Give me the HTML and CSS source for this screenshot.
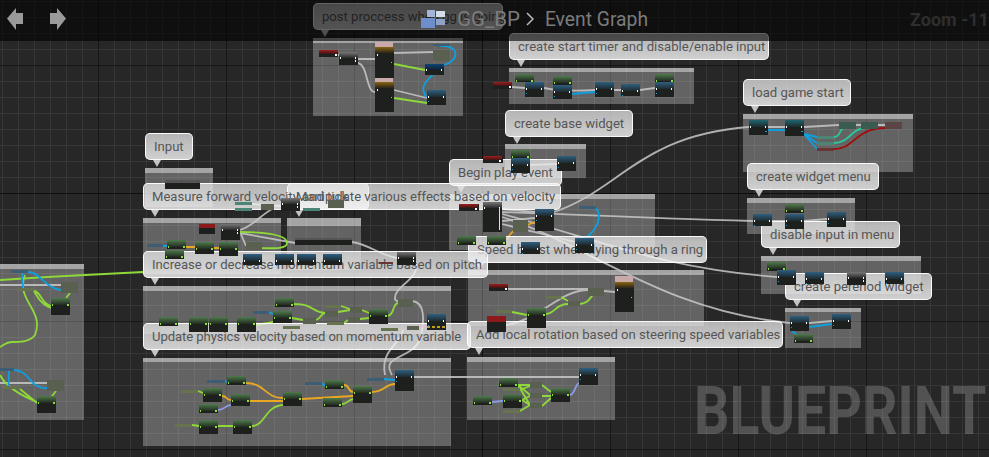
FILE: index.html
```html
<!DOCTYPE html>
<html>
<head>
    <meta charset="utf-8">
    <title>GG_BP Event Graph</title>
    <link rel="stylesheet" href="styles.css">
</head>
<body>
<div class="graph">
    <svg class="canvas" width="989" height="457" viewBox="0 0 989 457">
        <!-- comment boxes -->
        <g class="boxes">
            <rect x="0" y="264" width="84" height="156"/>
            <rect x="145" y="168" width="68" height="39"/>
            <rect x="143" y="218" width="138" height="56"/>
            <rect x="287" y="218" width="74" height="52"/>
            <rect x="143" y="286" width="308" height="48"/>
            <rect x="143" y="358" width="308" height="88"/>
            <rect x="313" y="38" width="150" height="78"/>
            <rect x="509" y="68" width="185" height="36"/>
            <rect x="505" y="144" width="81" height="34"/>
            <rect x="449" y="194" width="206" height="56"/>
            <rect x="468" y="270" width="236" height="56"/>
            <rect x="467" y="357" width="148" height="63"/>
            <rect x="743" y="114" width="170" height="58"/>
            <rect x="747" y="198" width="108" height="36"/>
            <rect x="761" y="256" width="160" height="38"/>
            <rect x="785" y="308" width="76" height="40"/>
        </g>
        <g class="box-heads">
            <rect x="0" y="264" width="84" height="5"/>
            <rect x="145" y="168" width="68" height="5"/>
            <rect x="143" y="218" width="138" height="5"/>
            <rect x="287" y="218" width="74" height="8"/>
            <rect x="143" y="286" width="308" height="5"/>
            <rect x="143" y="358" width="308" height="4"/>
            <rect x="313" y="38" width="150" height="5"/>
            <rect x="509" y="68" width="185" height="4"/>
            <rect x="505" y="144" width="81" height="5"/>
            <rect x="449" y="194" width="206" height="5"/>
            <rect x="468" y="270" width="236" height="5"/>
            <rect x="467" y="357" width="148" height="5"/>
            <rect x="743" y="114" width="170" height="5"/>
            <rect x="747" y="198" width="108" height="5"/>
            <rect x="761" y="256" width="160" height="5"/>
            <rect x="785" y="308" width="76" height="4"/>
        </g>

        <!-- exec wires -->
        <g class="wire w-exec">
            <path d="M0 285H61M0 383H47"/>
            <path d="M338 55H339M358 59H375M358 63C368 65 366 92 375 92M394 53L433 52M394 90L427 98"/>
            <path d="M512 87L525 88M544 88C560 91 580 91 595 90M614 90H621M640 90L655 88"/>
            <path d="M530 165L557 164"/>
            <path d="M554 212C620 190 640 135 749 127M768 127H785M804 127L839 125M856 125H861M878 125H885"/>
            <path d="M502 212C560 214 640 218 753 221M772 221H785M804 221L827 219"/>
            <path d="M502 214C600 240 660 268 777 277"/>
            <path d="M502 217C590 245 660 310 790 323M809 323L832 321"/>
            <path d="M502 209L535 212M502 221L535 218M502 224L575 242"/>
            <path d="M508 289H588M604 291L615 292M506 325C540 320 560 290 588 290"/>
            <path d="M414 377H579"/>
            <path d="M240 233L295 243M352 242C370 245 380 255 397 258M240 230C255 225 260 215 274 208M240 232L246 246M252 204L281 206"/>
            <path d="M416 262C420 280 395 285 395 298C395 303 400 300 403 300M412 301C425 302 425 320 420 340C410 360 380 355 392 375"/>
            <path d="M403 330C400 345 380 350 385 375"/>
        </g>

        <!-- data wires -->
        <g class="wire w-green">
            <path d="M0 280L47 277L143 272"/>
            <path d="M25 275C15 300 45 310 35 335C30 342 20 342 12 342C6 342 4 345 0 347"/>
            <path d="M34 291C42 292 40 303 51 306M34 291C38 298 42 305 51 308M70 293L66 298"/>
            <path d="M0 375C5 385 20 395 37 402M20 389L37 403M56 391L52 396"/>
            <path d="M240 232C270 232 287 235 287 243C287 250 270 248 250 248"/>
            <path d="M394 64L425 70M394 98L427 103"/>
            <path d="M512 312L527 315M546 314C555 314 555 304 568 304M580 304C590 303 590 296 596 292M561 297L568 301"/>
            <path d="M294 304C315 304 310 312 325 313H338M292 318L303 320M316 320C322 318 320 314 325 313M338 312L350 310M362 310L369 313M360 319L369 318M388 316C395 314 392 304 398 303M256 325L273 322M341 306L350 309M344 323L348 320"/>
            <path d="M198 391L203 393M192 425L199 426M218 426H233M252 426C265 426 265 406 283 405M342 404C347 404 348 400 353 399"/>
            <path d="M518 385H530M518 385L530 395M518 385L530 405M520 390L530 386M522 400L530 396M522 400L530 405M520 411L530 405M542 385L551 392M542 396H551M542 406L551 398"/>
        </g>
        <g class="wire w-blue">
            <path d="M28 272C40 272 45 288 61 290M23 272C20 280 25 285 22 290M14 370C30 370 30 390 47 388M9 370C8 378 10 382 8 388"/>
            <path d="M427 97C415 85 435 75 437 70M444 65C460 60 460 45 440 46"/>
            <path d="M572 94L595 92"/>
            <path d="M596 208C605 220 590 240 578 240"/>
            <path d="M768 130H785M804 134L817 137M804 134L817 143M804 134L817 149"/>
            <path d="M809 327L832 324M792 331L797 335"/>
            <path d="M163 246H167M225 381L227 382M322 383L325 386M384 379L395 380M269 312L273 314"/>
        </g>
        <g class="wire w-orange">
            <path d="M186 247H195M214 248H219"/>
            <path d="M246 383C265 383 265 398 283 398M222 396C228 396 225 400 231 400M250 401H283M302 399L353 396M344 385C350 385 348 392 353 392M372 392C385 392 385 384 395 384"/>
            <path d="M507 240C512 228 520 228 535 222"/>
        </g>
        <g class="wire w-teal">
            <path d="M834 137C842 137 838 128 845 128M834 143C850 143 850 129 865 128"/>
        </g>
        <path class="wire w-red" d="M834 149C855 149 855 128 885 128"/>
        <g class="wire w-violet">
            <path d="M218 410C225 410 225 405 231 405M492 402L503 401M570 395C575 394 575 385 579 383"/>
        </g>
        <path class="wire w-pink" d="M419 328L427 325"/>
    </svg>

    <div class="bubble b-post">post proccess when gg is going</div>
    <div class="bubble b-timer">create start timer and disable/enable input</div>
    <div class="bubble b-base">create base widget</div>
    <div class="bubble b-load">load game start</div>
    <div class="bubble b-menu">create widget menu</div>
    <div class="bubble b-disable">disable input in menu</div>
    <div class="bubble b-input">Input</div>
    <div class="bubble b-measure"><span class="through">Measure forward velocity and tick</span></div>
    <div class="bubble b-manip">Manipulate various effects based on velocity</div>
    <div class="bubble b-begin">Begin play event</div>
    <div class="bubble b-speed">Speed boost when flying through a ring</div>
    <div class="bubble b-increase">Increase or decrease momentum variable based on pitch</div>
    <div class="bubble b-perenod">create perenod widget</div>
    <div class="bubble b-update">Update physics velocity based on momentum variable</div>
    <div class="bubble b-local">Add local rotation based on steering speed variables</div>

    <svg class="canvas nodes" width="989" height="457" viewBox="0 0 989 457">
        <defs>
            <linearGradient id="gBlue" x1="0" y1="0" x2="0" y2="1"><stop offset="0" stop-color="#2f5f80"/><stop offset="1" stop-color="#1e2a30"/></linearGradient>
            <linearGradient id="gTeal" x1="0" y1="0" x2="0" y2="1"><stop offset="0" stop-color="#1f6670"/><stop offset="1" stop-color="#1c2a2c"/></linearGradient>
            <linearGradient id="gGreen" x1="0" y1="0" x2="0" y2="1"><stop offset="0" stop-color="#4f7a4c"/><stop offset="1" stop-color="#222b20"/></linearGradient>
            <linearGradient id="gRed" x1="0" y1="0" x2="0" y2="1"><stop offset="0" stop-color="#a01c1c"/><stop offset="1" stop-color="#3a1616"/></linearGradient>
            <linearGradient id="gGrey" x1="0" y1="0" x2="0" y2="1"><stop offset="0" stop-color="#777"/><stop offset="1" stop-color="#2a2a2a"/></linearGradient>
            <linearGradient id="gBrown" x1="0" y1="0" x2="0" y2="1"><stop offset="0" stop-color="#8a6414"/><stop offset="1" stop-color="#2a2618"/></linearGradient>
            <linearGradient id="gNavy" x1="0" y1="0" x2="0" y2="1"><stop offset="0" stop-color="#0d4478"/><stop offset="1" stop-color="#10202c"/></linearGradient>
            <g id="nb"><rect width="19" height="7" fill="url(#gBlue)"/><rect class="pin" x="1" y="6" width="1" height="2"/><rect class="pin" x="16" y="6" width="1" height="2"/><rect class="pin-b" x="1" y="11" width="1" height="1"/></g>
            <g id="nt"><rect width="19" height="7" fill="url(#gTeal)"/><rect class="pin" x="1" y="6" width="1" height="2"/><rect class="pin" x="16" y="6" width="1" height="2"/><rect class="pin-b" x="16" y="11" width="2" height="1"/></g>
            <g id="ng"><rect width="19" height="7" fill="url(#gGreen)"/><rect class="pin-g" x="16" y="6" width="2" height="2"/><rect class="pin-g" x="1" y="6" width="1" height="2"/></g>
            <g id="nr"><rect width="19" height="4" fill="url(#gRed)"/><rect class="pin" x="16" y="4" width="2" height="2"/></g>
            <g id="ny"><rect width="19" height="6" fill="url(#gGrey)"/><rect class="pin" x="1" y="5" width="1" height="2"/><rect class="pin" x="16" y="5" width="1" height="2"/><rect class="pin" x="16" y="8" width="1" height="2"/></g>
            <g id="no"><rect width="19" height="6" fill="url(#gBrown)"/><rect class="pin" x="2" y="7" width="1" height="2"/><rect class="pin-g" x="16" y="15" width="1" height="1"/></g>
            <g id="nn"><rect width="19" height="6" fill="url(#gNavy)"/><rect class="pin" x="1" y="5" width="1" height="2"/><rect class="pin" x="16" y="5" width="1" height="2"/></g>
        </defs>

        <!-- nodes: left box -->
        <rect class="get-b" x="11" y="270" width="17" height="3"/>
        <rect class="mini" x="61" y="282" width="17" height="11"/>
        <rect class="get-g" x="17" y="288" width="17" height="3"/>
        <rect class="body" x="51" y="298" width="19" height="17"/><use href="#ng" x="51" y="298"/>
        <rect class="get-b" x="0" y="368" width="14" height="3"/>
        <rect class="mini" x="47" y="380" width="17" height="11"/>
        <rect class="get-g" x="3" y="386" width="17" height="3"/>
        <rect class="body" x="37" y="396" width="19" height="17"/><use href="#ng" x="37" y="396"/>

        <!-- nodes: input, measure, manipulate -->
        <rect class="body" x="165" y="180" width="35" height="9"/><rect class="long" x="165" y="180" width="35" height="3"/>
        <rect class="get-t" x="235" y="202" width="17" height="3"/>
        <rect class="get-t" x="235" y="208" width="17" height="3"/>
        <rect class="mini" x="261" y="204" width="13" height="6"/>
        <rect class="body" x="281" y="198" width="19" height="13"/><use href="#ny" x="281" y="198"/>
        <rect class="get-t" x="303" y="208" width="17" height="3"/>
        <rect class="mini" x="328" y="200" width="16" height="8"/>
        <rect class="body" x="199" y="224" width="16" height="10"/><rect class="red-top" x="199" y="224" width="16" height="4"/>
        <rect class="body" x="221" y="224" width="19" height="16"/><use href="#ny" x="221" y="224"/>
        <rect class="get-b" x="147" y="244" width="16" height="3"/>
        <rect class="body" x="167" y="240" width="19" height="9"/><use href="#ng" x="167" y="240"/>
        <rect class="body" x="165" y="250" width="19" height="9"/><use href="#ng" x="165" y="250"/>
        <rect class="body" x="195" y="242" width="19" height="12"/><use href="#ng" x="195" y="242"/>
        <rect class="body" x="219" y="242" width="19" height="14"/><use href="#ng" x="219" y="242"/>
        <rect class="mini" x="246" y="242" width="16" height="8"/>
        <rect class="body" x="295" y="238" width="57" height="7"/><rect class="long" x="295" y="238" width="57" height="2"/>
        <rect class="body" x="243" y="254" width="19" height="11"/><use href="#nb" x="243" y="254"/>
        <rect class="body" x="275" y="254" width="19" height="11"/><use href="#nb" x="275" y="254"/>
        <rect class="body" x="297" y="254" width="19" height="11"/><use href="#nb" x="297" y="254"/>
        <rect class="body" x="323" y="254" width="19" height="11"/><use href="#nb" x="323" y="254"/>
        <rect class="get-r" x="379" y="262" width="14" height="2"/>
        <rect class="body" x="397" y="252" width="19" height="13"/><use href="#ny" x="397" y="252"/>

        <!-- nodes: momentum -->
        <rect class="body" x="159" y="317" width="19" height="9"/><use href="#ng" x="159" y="317"/>
        <rect class="body" x="189" y="317" width="19" height="15"/><use href="#ng" x="189" y="317"/>
        <rect class="body" x="209" y="317" width="19" height="15"/><use href="#ng" x="209" y="317"/>
        <rect class="body" x="237" y="317" width="19" height="15"/><use href="#ng" x="237" y="317"/>
        <rect class="get-b" x="253" y="311" width="16" height="3"/>
        <rect class="body" x="275" y="298" width="19" height="9"/><use href="#ng" x="275" y="298"/>
        <rect class="body" x="273" y="311" width="19" height="12"/><use href="#ng" x="273" y="311"/>
        <rect class="mini" x="303" y="318" width="13" height="6"/>
        <rect class="get-g" x="325" y="305" width="16" height="3"/>
        <rect class="mini" x="325" y="311" width="13" height="6"/>
        <rect class="get-g" x="327" y="322" width="17" height="3"/>
        <rect class="get-g" x="283" y="326" width="17" height="3"/>
        <rect class="mini" x="348" y="317" width="12" height="5"/>
        <rect class="mini" x="350" y="307" width="12" height="6"/>
        <rect class="body" x="369" y="309" width="19" height="15"/><use href="#ng" x="369" y="309"/>
        <rect class="mini" x="398" y="299" width="15" height="8"/>
        <rect class="body" x="427" y="314" width="19" height="16"/><use href="#nb" x="427" y="314"/>
        <path class="hazard" d="M427 327H446"/>
        <rect class="get-g" x="381" y="328" width="17" height="3"/>
        <rect class="mini" x="407" y="326" width="12" height="4"/>

        <!-- nodes: physics -->
        <rect class="get-b" x="207" y="380" width="18" height="3"/>
        <rect class="body" x="227" y="376" width="19" height="9"/><use href="#ng" x="227" y="376"/>
        <rect class="get-g" x="181" y="390" width="17" height="3"/>
        <rect class="body" x="203" y="388" width="19" height="14"/><use href="#ng" x="203" y="388"/>
        <rect class="body" x="231" y="394" width="19" height="12"/><use href="#ng" x="231" y="394"/>
        <rect class="body" x="199" y="404" width="19" height="9"/><use href="#ng" x="199" y="404"/>
        <rect class="get-g" x="175" y="424" width="17" height="3"/>
        <rect class="body" x="199" y="420" width="19" height="14"/><use href="#ng" x="199" y="420"/>
        <rect class="body" x="233" y="420" width="19" height="14"/><use href="#ng" x="233" y="420"/>
        <rect class="body" x="283" y="392" width="19" height="14"/><use href="#ng" x="283" y="392"/>
        <rect class="get-b" x="305" y="382" width="17" height="3"/>
        <rect class="body" x="325" y="380" width="19" height="9"/><use href="#ng" x="325" y="380"/>
        <rect class="body" x="323" y="398" width="19" height="9"/><use href="#ng" x="323" y="398"/>
        <rect class="body" x="353" y="386" width="19" height="17"/><use href="#ng" x="353" y="386"/>
        <rect class="get-b" x="367" y="378" width="17" height="3"/>
        <rect class="body" x="395" y="370" width="19" height="21"/><use href="#nb" x="395" y="370"/>

        <!-- nodes: post process -->
        <rect class="body" x="319" y="50" width="19" height="7"/><use href="#nr" x="319" y="50"/>
        <rect class="body" x="339" y="52" width="19" height="13"/><use href="#ny" x="339" y="52"/>
        <rect class="pink" x="375" y="42" width="18" height="5"/>
        <rect class="body" x="375" y="47" width="19" height="31"/><use href="#no" x="375" y="47"/>
        <rect class="pink" x="375" y="78" width="18" height="4"/>
        <rect class="body" x="375" y="82" width="19" height="30"/><use href="#no" x="375" y="82"/>
        <rect class="get-b" x="433" y="44" width="17" height="2"/>
        <rect class="mini" x="433" y="50" width="17" height="11"/>
        <rect class="body" x="425" y="64" width="19" height="11"/><use href="#nn" x="425" y="64"/>
        <rect class="body" x="427" y="90" width="19" height="15"/><use href="#nb" x="427" y="90"/>

        <!-- nodes: start timer -->
        <rect class="body" x="493" y="82" width="19" height="7"/><use href="#nr" x="493" y="82"/>
        <rect class="body" x="515" y="74" width="19" height="8"/><use href="#ng" x="515" y="74"/>
        <rect class="body" x="525" y="82" width="19" height="15"/><use href="#nb" x="525" y="82"/>
        <rect class="body" x="553" y="76" width="19" height="9"/><use href="#ng" x="553" y="76"/>
        <rect class="body" x="553" y="85" width="19" height="14"/><use href="#nb" x="553" y="85"/>
        <rect class="body" x="595" y="82" width="19" height="15"/><use href="#nb" x="595" y="82"/>
        <rect class="body" x="621" y="84" width="19" height="12"/><use href="#nb" x="621" y="84"/>
        <rect class="body" x="655" y="74" width="19" height="8"/><use href="#ng" x="655" y="74"/>
        <rect class="body" x="655" y="82" width="19" height="15"/><use href="#nb" x="655" y="82"/>

        <!-- nodes: base widget -->
        <rect class="body" x="483" y="156" width="20" height="7"/><use href="#nr" x="483" y="156"/>
        <rect class="body" x="511" y="150" width="19" height="8"/><use href="#ng" x="511" y="150"/>
        <rect class="body" x="511" y="158" width="19" height="15"/><use href="#nb" x="511" y="158"/>
        <rect class="body" x="557" y="156" width="19" height="15"/><use href="#nb" x="557" y="156"/>

        <!-- nodes: begin play -->
        <rect class="body" x="459" y="204" width="20" height="7"/><use href="#nr" x="459" y="204"/>
        <rect class="body" x="483" y="202" width="19" height="30"/><use href="#ny" x="483" y="202"/>
        <rect class="pin-col" x="499" y="208" width="1" height="22"/>
        <rect class="mini" x="513" y="220" width="15" height="12"/>
        <rect class="body" x="535" y="209" width="19" height="22"/><use href="#nb" x="535" y="209"/>
        <rect class="get-b" x="579" y="206" width="17" height="3"/>
        <rect class="body" x="457" y="236" width="19" height="9"/><use href="#ng" x="457" y="236"/>
        <rect class="body" x="487" y="236" width="19" height="9"/><use href="#ng" x="487" y="236"/>
        <rect class="body" x="521" y="242" width="19" height="12"/><use href="#nb" x="521" y="242"/>
        <rect class="body" x="575" y="238" width="19" height="15"/><use href="#nb" x="575" y="238"/>

        <!-- nodes: speed boost -->
        <rect class="body" x="489" y="284" width="19" height="7"/><use href="#nr" x="489" y="284"/>
        <rect class="pink" x="615" y="276" width="18" height="6"/>
        <rect class="body" x="615" y="282" width="19" height="30"/><use href="#no" x="615" y="282"/>
        <rect class="mini" x="588" y="288" width="16" height="8"/>
        <rect class="mini" x="568" y="301" width="12" height="5"/>
        <rect class="get-g" x="545" y="296" width="16" height="3"/>
        <rect class="get-g" x="495" y="310" width="17" height="3"/>
        <rect class="body" x="527" y="308" width="19" height="20"/><use href="#ng" x="527" y="308"/>
        <rect class="body" x="487" y="316" width="19" height="16"/><rect class="red-top" x="487" y="316" width="19" height="6"/>

        <!-- nodes: local rotation -->
        <rect class="body" x="579" y="368" width="19" height="17"/><use href="#nb" x="579" y="368"/>
        <rect class="body" x="499" y="378" width="19" height="9"/><use href="#ng" x="499" y="378"/>
        <rect class="get-g" x="503" y="388" width="17" height="3"/>
        <rect class="body" x="503" y="394" width="19" height="14"/><use href="#ng" x="503" y="394"/>
        <rect class="body" x="473" y="396" width="19" height="9"/><use href="#ng" x="473" y="396"/>
        <rect class="get-g" x="503" y="410" width="17" height="3"/>
        <rect class="mini" x="530" y="382" width="12" height="6"/>
        <rect class="mini" x="530" y="393" width="12" height="5"/>
        <rect class="mini" x="530" y="403" width="12" height="5"/>
        <rect class="body" x="551" y="388" width="19" height="14"/><use href="#ng" x="551" y="388"/>

        <!-- nodes: load game -->
        <rect class="body" x="749" y="120" width="19" height="15"/><use href="#nt" x="749" y="120"/>
        <rect class="body" x="785" y="120" width="19" height="16"/><use href="#nt" x="785" y="120"/>
        <rect class="mini-t" x="839" y="122" width="17" height="7"/>
        <rect class="mini-t" x="861" y="122" width="17" height="7"/>
        <rect class="mini-r" x="885" y="122" width="17" height="7"/>
        <rect class="get-t" x="817" y="136" width="17" height="3"/>
        <rect class="get-t" x="817" y="142" width="17" height="3"/>
        <rect class="get-r" x="817" y="148" width="17" height="3"/>

        <!-- nodes: widget menu -->
        <rect class="body" x="753" y="214" width="19" height="12"/><use href="#nb" x="753" y="214"/>
        <rect class="body" x="785" y="204" width="19" height="9"/><use href="#ng" x="785" y="204"/>
        <rect class="body" x="785" y="214" width="19" height="15"/><use href="#nb" x="785" y="214"/>
        <rect class="body" x="827" y="212" width="19" height="15"/><use href="#nb" x="827" y="212"/>

        <!-- nodes: disable input -->
        <rect class="body" x="767" y="262" width="19" height="9"/><use href="#ng" x="767" y="262"/>
        <rect class="body" x="777" y="270" width="19" height="15"/><use href="#nb" x="777" y="270"/>
        <rect class="body" x="805" y="272" width="19" height="12"/><use href="#nb" x="805" y="272"/>
        <rect class="body" x="847" y="272" width="19" height="13"/><use href="#ny" x="847" y="272"/>
        <rect class="body" x="885" y="272" width="19" height="12"/><use href="#nb" x="885" y="272"/>

        <!-- nodes: perenod widget -->
        <rect class="body" x="790" y="316" width="19" height="15"/><use href="#nb" x="790" y="316"/>
        <rect class="body" x="832" y="314" width="19" height="15"/><use href="#nb" x="832" y="314"/>
        <rect class="body" x="794" y="334" width="19" height="9"/><use href="#ng" x="794" y="334"/>
    </svg>

    <div class="watermark">BLUEPRINT</div>

    <header class="topbar">
        <nav class="history">
            <svg width="17" height="23" viewBox="0 0 17 23"><path class="arrow" d="M0 10.500L9 0V5H16V16H9V22Z"/></svg>
            <svg width="17" height="23" viewBox="0 0 17 23"><path class="arrow" d="M17 10.500L8 0V5H1V16H8V22Z"/></svg>
        </nav>
        <div class="crumbs">
            <svg class="bp-icon" width="27" height="20" viewBox="0 0 27 20">
                <rect class="sq-a" x="1" y="9" width="14" height="10"/>
                <rect class="sq-b" x="7" y="1" width="8" height="7"/>
                <rect class="sq-c" x="16" y="2" width="9" height="6"/>
                <rect class="sq-d" x="16" y="10" width="9" height="6"/>
            </svg>
            <span class="crumb-name">GG_BP</span>
            <svg class="chevron" width="8" height="14" viewBox="0 0 8 14"><path d="M1 1L7 7L1 13"/></svg>
            <span class="crumb-graph">Event Graph</span>
        </div>
        <div class="zoom">Zoom -11</div>
    </header>
</div>
</body>
</html>
```

FILE: styles.css
```css
html, body {
    margin: 0;
    padding: 0;
    background: #262626;
}
.graph {
    width: 989px;
    height: 457px;
    position: relative;
    overflow: hidden;
    font-family: Roboto, "Liberation Sans", sans-serif;
    background-color: #272727;
    background-image:
        linear-gradient(#0e0e0e, #0e0e0e),
        linear-gradient(#0e0e0e, #0e0e0e),
        linear-gradient(#161616 1px, transparent 1px),
        linear-gradient(90deg, #161616 1px, transparent 1px),
        linear-gradient(#363636 1px, transparent 1px),
        linear-gradient(90deg, #363636 1px, transparent 1px);
    background-size:
        100% 1px,
        1px 100%,
        128px 128px,
        128px 128px,
        16px 16px,
        16px 16px;
    background-position:
        0 193px,
        482px 0,
        0 65px,
        98px 0,
        0 1px,
        2px 0;
    background-repeat: no-repeat, no-repeat, repeat, repeat, repeat, repeat;
}
.canvas {
    position: absolute;
    top: 0;
    left: 0;
}
.nodes {
    z-index: 2;
}

/* comment boxes */
.boxes rect {
    fill: rgba(255, 255, 255, 0.28);
}
.box-heads rect {
    fill: rgba(255, 255, 255, 0.42);
}

/* wires */
.wire {
    fill: none;
    stroke-width: 1.8;
}
.w-exec {
    stroke: #c8c8c8;
    stroke-opacity: 0.85;
}
.w-green {
    stroke: #8fd83a;
}
.w-blue {
    stroke: #0e9fe0;
}
.w-orange {
    stroke: #e8a822;
}
.w-teal {
    stroke: #2cc79a;
}
.w-red {
    stroke: #a00c0c;
}
.w-violet {
    stroke: #8c9be8;
}
.w-pink {
    stroke: #e040c0;
}

/* nodes */
.body {
    fill: #1e201e;
}
.long {
    fill: #555;
}
.red-top {
    fill: #8c1a1a;
}
.pink {
    fill: #c9a9a9;
}
.pin {
    fill: #fff;
}
.pin-g {
    fill: #8fe03a;
}
.pin-b {
    fill: #0e9fe0;
}
.pin-col {
    fill: #ddd;
}
.mini {
    fill: #59604f;
}
.mini-t {
    fill: #3b5a52;
}
.mini-r {
    fill: #5a4444;
}
.get-g {
    fill: #67724f;
}
.get-b {
    fill: #3d5d74;
}
.get-t {
    fill: #4d8475;
}
.get-r {
    fill: #6a3434;
}
.hazard {
    stroke: #c0a020;
    stroke-width: 2;
    stroke-dasharray: 3 2;
}

/* comment bubbles */
.bubble {
    position: absolute;
    box-sizing: border-box;
    height: 27px;
    line-height: 25px;
    padding-left: 8px;
    font-size: 13.100px;
    color: #555;
    white-space: nowrap;
    border: 1px solid rgba(255, 255, 255, 0.9);
    border-radius: 5px;
    background: linear-gradient(rgba(235, 235, 235, 0.72), rgba(245, 245, 245, 0.82));
}
.bubble::after {
    content: "";
    position: absolute;
    left: 7px;
    bottom: -8px;
    border-style: solid;
    border-width: 7px 4px 0;
    border-color: rgba(225, 225, 225, 0.85) transparent transparent;
}
/* this text stays readable where the next bubble lies over it */
.through {
    position: relative;
    z-index: 1;
}
.b-post { left: 313px; top: 3px; width: 190px; }
.b-timer { left: 509px; top: 33px; width: 260px; }
.b-base { left: 505px; top: 110px; width: 128px; }
.b-load { left: 743px; top: 79px; width: 108px; }
.b-menu { left: 747px; top: 163px; width: 132px; }
.b-disable { left: 761px; top: 221px; width: 139px; }
.b-input { left: 145px; top: 133px; width: 48px; }
.b-measure { left: 143px; top: 183px; width: 226px; }
.b-manip { left: 287px; top: 183px; width: 274px; }
.b-begin { left: 449px; top: 159px; width: 113px; }
.b-speed { left: 468px; top: 236px; width: 239px; }
.b-increase { left: 143px; top: 251px; width: 345px; }
.b-perenod { left: 785px; top: 273px; width: 147px; }
.b-update { left: 143px; top: 323px; width: 328px; letter-spacing: -0.08px; }
.b-local { left: 467px; top: 321px; width: 316px; }

/* watermark */
.watermark {
    position: absolute;
    z-index: 3;
    left: 694px;
    top: 373px;
    font-size: 66px;
    line-height: 78px;
    font-weight: 700;
    color: rgba(255, 255, 255, 0.2);
    transform: scaleX(0.84);
    transform-origin: left center;
    white-space: nowrap;
}

/* top bar */
.topbar {
    position: absolute;
    z-index: 3;
    top: 0;
    left: 0;
    width: 100%;
    height: 41px;
    box-sizing: border-box;
    display: flex;
    align-items: center;
    padding: 0 0 3px 7px;
    background: rgba(0, 0, 0, 0.6);
}
.history {
    display: flex;
    flex: none;
    gap: 25px;
    width: 413px;
}
.arrow {
    fill: #9a9a9a;
}
.crumbs {
    display: flex;
    flex: none;
    align-items: center;
    width: 490px;
    font-size: 20px;
    color: #7c7c7c;
}
.bp-icon {
    margin-right: 10px;
}
.sq-a { fill: #6d8ecb; }
.sq-b { fill: #a3b5d8; }
.sq-c { fill: #d5dcea; }
.sq-d { fill: #8fa3c8; }
.crumb-name {
    margin-right: 6px;
    font-size: 20.500px;
}
.chevron {
    margin-right: 11px;
}
.chevron path {
    fill: none;
    stroke: #bbb;
    stroke-width: 1.500;
}
.crumb-graph {
    font-size: 19.300px;
}
.zoom {
    flex: none;
    font-size: 18px;
    font-weight: 700;
    color: #2e2e2e;
    white-space: nowrap;
}
```
